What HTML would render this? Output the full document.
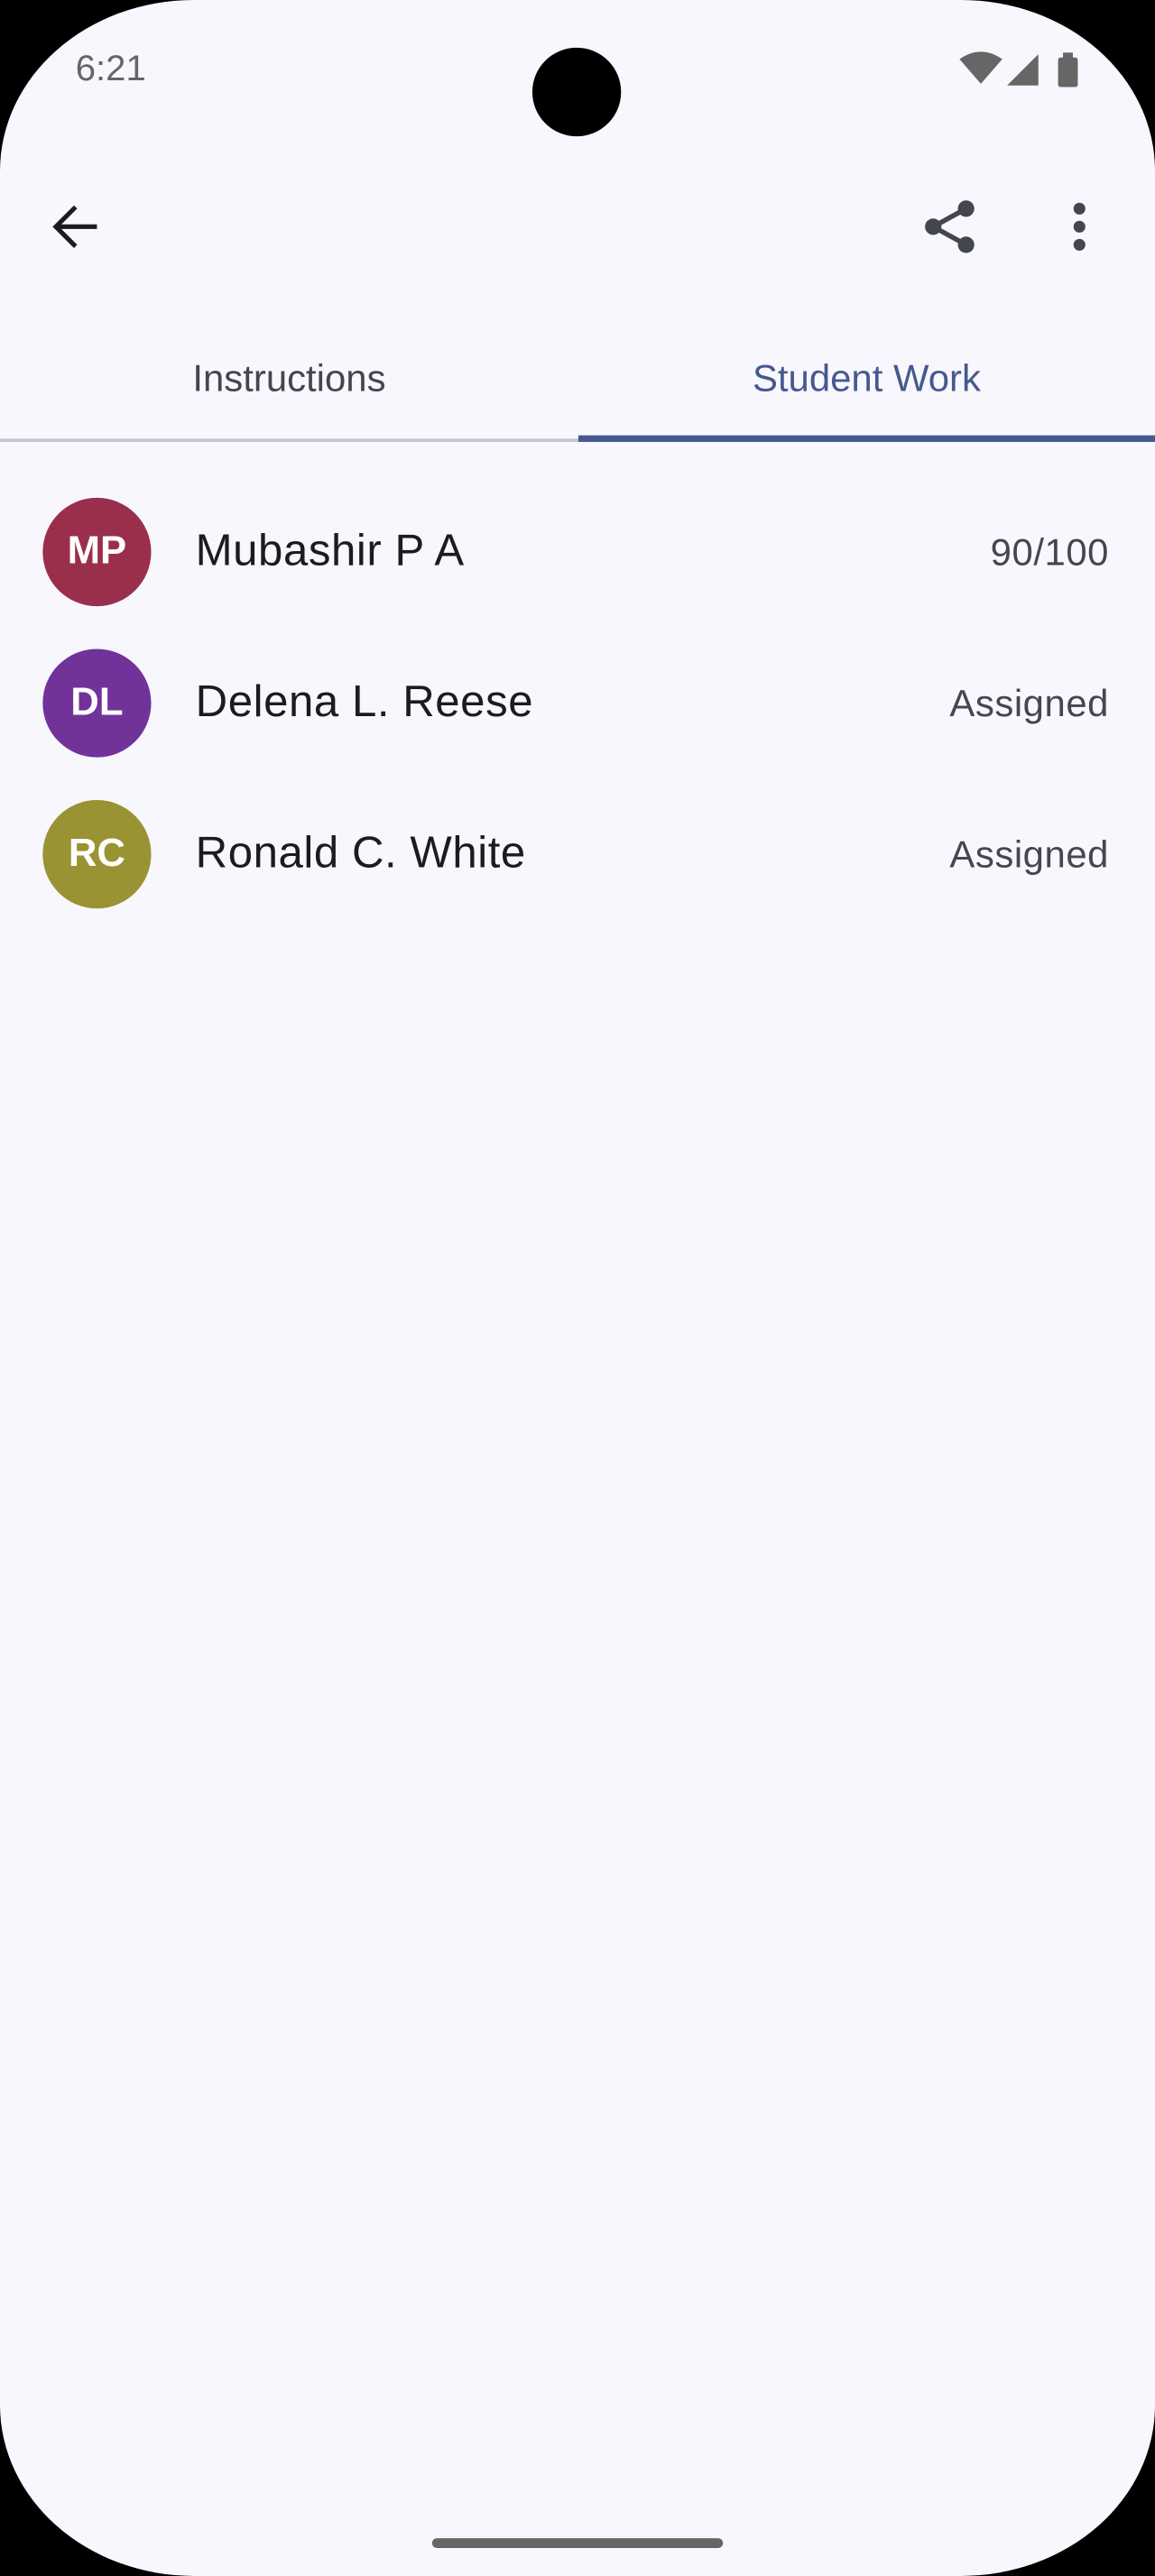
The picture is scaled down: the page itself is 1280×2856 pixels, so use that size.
<!DOCTYPE html>
<html><head><meta charset="utf-8"><style>
html,body{margin:0;padding:0;background:#000;width:1280px;height:2856px;overflow:hidden}
#s{position:absolute;left:0;top:0;width:703px;height:1568px;transform:scale(1.8208,1.8214);transform-origin:0 0;background:#f8f7fd;border-radius:118px/104px;overflow:hidden;font-family:"Liberation Sans",sans-serif}
.a{position:absolute}
.av{position:absolute;left:26px;width:66px;height:66px;border-radius:50%;color:#fff;font-size:24px;font-weight:bold;text-align:center;line-height:66px}
.nm{position:absolute;left:119px;font-size:27px;color:#1b1b21;letter-spacing:.3px}
.rt{position:absolute;right:28px;font-size:23px;color:#45464f;letter-spacing:.3px}
</style></head><body><div id="s">
<div class="a" style="left:46px;top:29px;font-size:22px;color:#666">6:21</div>
<div class="a" style="left:324px;top:29px;width:54px;height:54px;border-radius:50%;background:#000"></div>
<svg class="a" style="left:583px;top:30px" width="80" height="24" viewBox="0 0 80 24">
<path d="M1 6 Q14 -3 27 6 L14 21 Z" fill="#666"/>
<path d="M30 22 L49 3 L49 22 Z" fill="#666"/>
<rect x="61" y="5" width="12" height="18" rx="1.5" fill="#666"/><rect x="64" y="2" width="6" height="4" fill="#666"/>
</svg>
<svg class="a" style="left:30px;top:122px" width="32" height="32" viewBox="0 0 32 32"><path d="M29 16 H5 M16 4 L4 16 L16 28" stroke="#1b1b21" stroke-width="2.8" fill="none"/></svg>
<svg class="a" style="left:560px;top:120px" width="36" height="36" viewBox="0 0 36 36" fill="#44464f"><circle cx="28" cy="7" r="5"/><circle cx="8" cy="18" r="5"/><circle cx="28" cy="29" r="5"/><path d="M28 7 L8 18 L28 29" stroke="#44464f" stroke-width="3" fill="none"/></svg>
<svg class="a" style="left:647px;top:122px" width="20" height="32" viewBox="0 0 20 32" fill="#44464f"><circle cx="10" cy="5" r="3.6"/><circle cx="10" cy="16" r="3.6"/><circle cx="10" cy="27" r="3.6"/></svg>
<div class="a" style="left:0;width:352px;top:217px;text-align:center;font-size:23px;color:#44464f;font-weight:500">Instructions</div>
<div class="a" style="left:352px;width:351px;top:217px;text-align:center;font-size:23px;color:#46598f;font-weight:500">Student Work</div>
<div class="a" style="left:0;top:267px;width:703px;height:2px;background:#c5c5d0"></div>
<div class="a" style="left:352px;top:265px;width:351px;height:4px;background:#46598f"></div>
<div class="av" style="top:303px;background:#9a2f4b">MP</div>
<div class="nm" style="top:320px">Mubashir P A</div><div class="rt" style="top:323px">90/100</div>
<div class="av" style="top:395px;background:#71339a">DL</div>
<div class="nm" style="top:412px">Delena L. Reese</div><div class="rt" style="top:415px">Assigned</div>
<div class="av" style="top:487px;background:#999334">RC</div>
<div class="nm" style="top:504px">Ronald C. White</div><div class="rt" style="top:507px">Assigned</div>
<div class="a" style="left:263px;top:1545px;width:177px;height:6px;border-radius:3px;background:#666"></div>
</div></body></html>
